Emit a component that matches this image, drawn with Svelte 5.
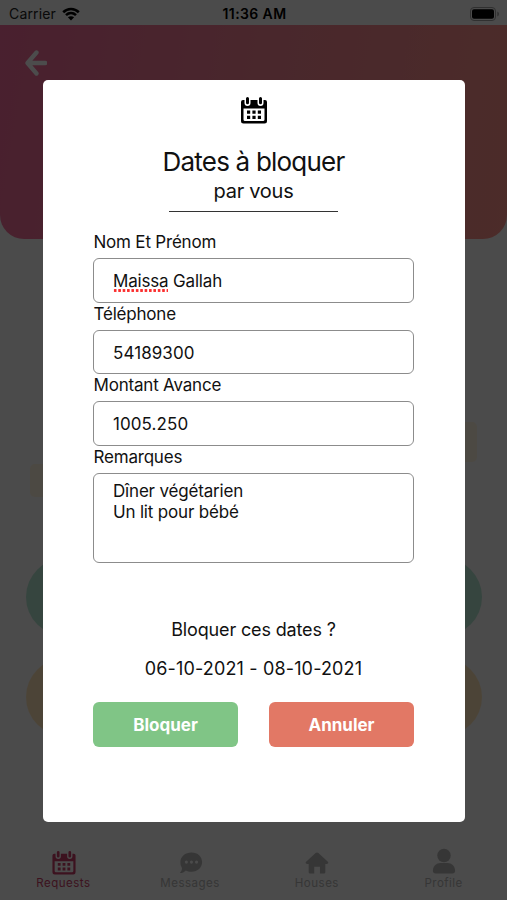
<script lang="ts">
  const tabs = [
    { id: 'requests', label: 'Requests', active: true },
    { id: 'messages', label: 'Messages', active: false },
    { id: 'houses', label: 'Houses', active: false },
    { id: 'profile', label: 'Profile', active: false }
  ];

  const fields = [
    { label: 'Téléphone', value: '54189300' },
    { label: 'Montant Avance', value: '1005.250' }
  ];

  const startDate = '06-10-2021';
  const endDate = '08-10-2021';
</script>

{#snippet calendar()}
  <svg class="calendar" viewBox="0 0 26 27" aria-hidden="true">
    <path fill="currentColor" fill-rule="evenodd" d="M2 3h1.500v3a3 3 0 0 0 6 0V3h7v3a3 3 0 0 0 6 0V3H24a2 2 0 0 1 2 2v19a2.500 2.500 0 0 1-2.500 2.500h-21A2.500 2.500 0 0 1 0 24V5a2 2 0 0 1 2-2zm.5 8.500v11a1.500 1.500 0 0 0 1.500 1.500h18a1.500 1.500 0 0 0 1.500-1.500v-11z" />
    <path fill="currentColor" d="M5 1.500a1.500 1.500 0 0 1 3 0v4.300a1.500 1.500 0 0 1-3 0zM18 1.500a1.500 1.500 0 0 1 3 0v4.300a1.500 1.500 0 0 1-3 0zM6 13.500h3.200v3.200H6zm5.400 0h3.200v3.200h-3.200zm5.400 0H20v3.200h-3.200zM6 18.700h3.200v3.200H6zm5.400 0h3.200v3.200h-3.200zm5.400 0H20v3.200h-3.200z" />
  </svg>
{/snippet}

<div class="screen">
  <div class="page">
    <div class="status-bar">
      <div class="carrier">
        <span>Carrier</span>
        <svg class="wifi" viewBox="0 0 18 14" aria-hidden="true">
          <path d="M1.200 5.200C5.700.9 12.300.9 16.800 5.200M4 8.100c2.900-2.700 7.100-2.700 10 0" fill="none" stroke="currentColor" stroke-width="2.600" />
          <path d="M9 13.500 5.900 10.300c1.800-1.500 4.400-1.500 6.200 0z" fill="currentColor" />
        </svg>
      </div>
      <span class="time">11:36 AM</span>
      <div class="battery">
        <svg viewBox="0 0 30 14" aria-hidden="true">
          <rect x=".5" y=".5" width="25" height="13" rx="3.500" fill="none" stroke="#a0a0a0" />
          <rect x="2" y="2.200" width="22" height="9.600" rx="2" />
          <path d="M27.300 4.500c2.200 1 2.200 4 0 5z" fill="#a0a0a0" />
        </svg>
      </div>
    </div>

    <header class="hero">
      <svg class="back" viewBox="0 0 22 26" aria-hidden="true">
        <path d="M11.500 2.500 2.500 13l9 10.500M3 13h17.200" fill="none" stroke="currentColor" stroke-width="4.300" stroke-linecap="round" stroke-linejoin="round" />
      </svg>
    </header>

    <main class="content">
      <div class="chip chip-right"></div>
      <div class="chip chip-left"></div>
      <div class="pill green"></div>
      <div class="pill yellow"></div>
    </main>

    <nav class="tab-bar">
      {#each tabs as tab}
        <div class="tab" class:active={tab.active}>
          <div class="tab-icon">
            {#if tab.id === 'requests'}
              {@render calendar()}
            {:else if tab.id === 'messages'}
              <svg viewBox="0 0 26 24" aria-hidden="true">
                <path fill="currentColor" fill-rule="evenodd" d="M13.500.5C20.300.5 25 5 25 11s-4.700 10.500-11.500 10.500c-2.500 0-4.500-.5-6.100-1.500C5.800 21.700 3.500 22.800 1 22.800c1.300-1.500 2.200-3.300 2.300-5.100A10.500 10.500 0 0 1 1.500 11C1.500 5 6.700.5 13.500.5zM8 9.300a1.700 1.700 0 1 0 0 3.400 1.700 1.700 0 0 0 0-3.400zm5.500 0a1.700 1.700 0 1 0 0 3.400 1.700 1.700 0 0 0 0-3.400zm5.500 0a1.700 1.700 0 1 0 0 3.400 1.700 1.700 0 0 0 0-3.400z" />
              </svg>
            {:else if tab.id === 'houses'}
              <svg viewBox="0 0 26 24" aria-hidden="true">
                <path fill="currentColor" d="M11.500 1.100q1.500-1.200 3 0L24.500 10.500c1.300 1.300.8 2.500-.8 2.500H22v9q0 1.500-1.500 1.500h-4.300V16H10v7.500H5.500Q4 23.500 4 22v-9H2.200C.6 13 .1 11.800 1.500 10.500z" />
              </svg>
            {:else}
              <svg class="person" viewBox="0 0 26 28" aria-hidden="true">
                <circle cx="13" cy="7.500" r="7.300" fill="currentColor" />
                <path d="M1 24c0-5.500 4-8.500 8-8.500h8c4 0 8 3 8 8.500q0 3-3 3H4q-3 0-3-3z" fill="currentColor" />
              </svg>
            {/if}
          </div>
          <span class="tab-label">{tab.label}</span>
        </div>
      {/each}
    </nav>
  </div>

  <div class="backdrop">
    <div class="modal">
      <div class="modal-icon">{@render calendar()}</div>
      <h1>Dates à bloquer</h1>
      <h2>par vous</h2>
      <div class="divider"></div>

      <div class="form">
        <span class="label">Nom Et Prénom</span>
        <div class="input"><span class="misspelled">Maissa</span>&nbsp;Gallah</div>
        {#each fields as field}
          <span class="label">{field.label}</span>
          <div class="input number">{field.value}</div>
        {/each}
        <span class="label">Remarques</span>
        <div class="input textarea">
          <span>Dîner végétarien</span>
          <span>Un lit pour bébé</span>
        </div>
      </div>

      <p class="question">Bloquer ces dates ?</p>
      <p class="dates">{startDate} - {endDate}</p>

      <div class="actions">
        <button class="confirm">Bloquer</button>
        <button class="cancel">Annuler</button>
      </div>
    </div>
  </div>
</div>

<style>
  :global(body) {
    background: #4b4b4b;
  }

  .screen {
    position: relative;
    width: 507px;
    height: 900px;
    overflow: hidden;
    font-family: Inter, 'Liberation Sans', sans-serif;
    color: #111;
  }

  .page {
    display: flex;
    flex-direction: column;
    height: 100%;
    background: #fafafa;
  }

  .status-bar {
    display: grid;
    grid-template-columns: 1fr auto 1fr;
    align-items: center;
    height: 25px;
    padding: 2px 7px 0 9px;
    box-sizing: border-box;
    font-size: 14px;
    line-height: 22px;
    color: #000;
  }

  .carrier {
    display: flex;
    align-items: center;
    gap: 6px;
    letter-spacing: 0.15px;
    color: #222;
  }

  .wifi {
    width: 18px;
    height: 14px;
    color: #000;
  }

  .time {
    font-weight: 600;
    letter-spacing: 0.4px;
  }

  .battery {
    display: flex;
    justify-content: flex-end;
  }

  .battery svg {
    width: 30px;
    height: 14px;
  }

  .hero {
    height: 214px;
    flex: none;
    border-radius: 0 0 24px 24px;
    background: linear-gradient(100deg, #f36b9d 0%, #f58394 50%, #fd938a 100%);
  }

  .back {
    display: block;
    width: 22px;
    height: 26px;
    margin: 25px 0 0 25px;
    color: #fff;
  }

  .content {
    flex: 1;
    display: flex;
    flex-direction: column;
    padding: 183px 25px 0 26px;
  }

  .chip {
    flex: none;
    width: 80px;
    background: #fff5e0;
    border-radius: 5px;
  }

  .chip-right {
    align-self: flex-end;
    height: 40px;
    margin-right: 5px;
  }

  .chip-left {
    height: 33px;
    margin: 2px 0 0 4px;
  }

  .pill {
    flex: none;
    height: 78px;
    border-radius: 39px;
  }

  .green {
    margin-top: 61px;
    background: #b5e6d3;
  }

  .yellow {
    margin-top: 22px;
    background: #ffe5ba;
  }

  .tab-bar {
    display: grid;
    grid-template-columns: repeat(4, 1fr);
    height: 55px;
    flex: none;
  }

  .tab {
    display: flex;
    flex-direction: column;
    align-items: center;
    color: #b5b5b5;
  }

  .tab.active {
    color: #ca3f69;
  }

  .tab-icon {
    display: flex;
    align-items: flex-end;
    height: 30px;
    padding-left: 1px;
  }

  .tab-icon svg {
    width: 24px;
    height: 24px;
  }

  .tab-icon .person {
    height: 27px;
  }

  .tab-label {
    font-size: 11.500px;
    line-height: 16px;
    letter-spacing: 0.5px;
  }

  .backdrop {
    position: absolute;
    inset: 0;
    display: flex;
    justify-content: center;
    align-items: center;
    padding-top: 1px;
    background: rgba(0, 0, 0, 0.7);
  }

  .modal {
    display: flex;
    flex-direction: column;
    align-items: center;
    width: 422px;
    height: 742px;
    box-sizing: border-box;
    padding: 17px 50px 0;
    border-radius: 5px;
    background: #fff;
  }

  .modal-icon {
    height: 27px;
    color: #000;
  }

  .modal-icon .calendar {
    display: block;
    width: 26px;
    height: 27px;
  }

  h1,
  h2,
  p {
    margin: 0;
    font-weight: 400;
    white-space: nowrap;
  }

  h1 {
    margin-top: 22px;
    font-size: 26px;
    line-height: 32px;
    letter-spacing: -0.8px;
  }

  h2 {
    font-size: 20px;
    line-height: 26px;
    letter-spacing: -0.28px;
  }

  .divider {
    width: 169px;
    height: 1.500px;
    flex: none;
    margin-top: 7px;
    background: #333;
  }

  .form {
    display: flex;
    flex-direction: column;
    width: 321px;
    margin-top: 19px;
    font-size: 17px;
  }

  .label {
    height: 27px;
    flex: none;
    padding-left: 0.500px;
    line-height: 23px;
    letter-spacing: -0.2px;
  }

  .input {
    display: flex;
    align-items: center;
    height: 44.700px;
    flex: none;
    box-sizing: border-box;
    padding: 1px 18px 0 19px;
    border: 1.500px solid #8c8c8c;
    border-radius: 6px;
    font-size: 17px;
    letter-spacing: -0.18px;
  }

  .number {
    letter-spacing: 0.08px;
  }

  .misspelled {
    position: relative;
  }

  .misspelled::after {
    content: '';
    position: absolute;
    left: 0;
    right: 0;
    bottom: -1px;
    height: 3px;
    background: radial-gradient(circle, #fa3030 1.300px, transparent 1.700px) 0 0 / 4.400px 3px repeat-x;
  }

  .textarea {
    display: block;
    height: 90px;
    padding-top: 7px;
    line-height: 20.500px;
  }

  .textarea span {
    display: block;
  }

  .question {
    margin-top: 55px;
    font-size: 18px;
    line-height: 24px;
    letter-spacing: -0.15px;
  }

  .dates {
    margin-top: 15px;
    font-size: 18px;
    line-height: 24px;
    letter-spacing: 0.15px;
  }

  .actions {
    display: flex;
    justify-content: space-between;
    width: 321px;
    margin-top: 21px;
  }

  button {
    width: 145px;
    height: 45px;
    padding: 1px 0 0;
    border: 0;
    border-radius: 6px;
    font: 700 17px/44px Inter, 'Liberation Sans', sans-serif;
    color: #fff;
  }

  .confirm {
    background: #80c586;
  }

  .cancel {
    background: #e27865;
  }
</style>
